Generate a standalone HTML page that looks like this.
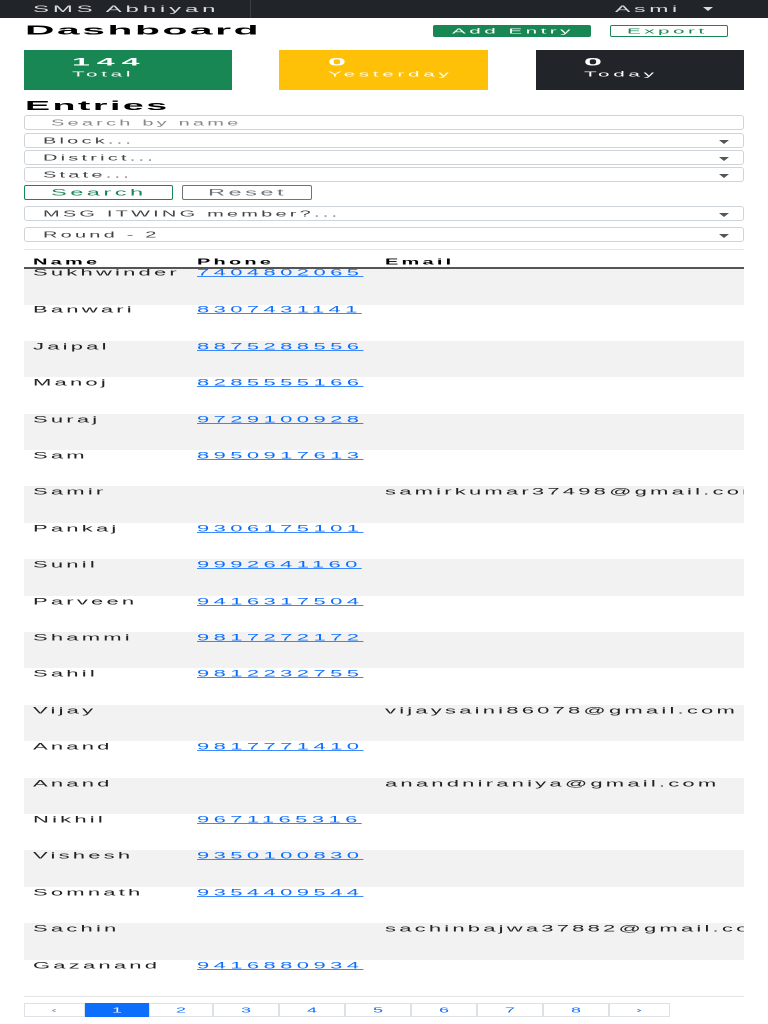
<!DOCTYPE html>
<html><head><meta charset="utf-8"><style>
*{margin:0;padding:0;box-sizing:border-box}
body{width:768px;height:1024px;overflow:hidden;background:#fff;font-family:"Liberation Sans",sans-serif;position:relative}
.a{position:absolute;line-height:0}
.s{display:inline-block;transform:scale(2,0.8);transform-origin:0 0;white-space:nowrap;letter-spacing:1.6px;font-size:11px;line-height:11px}
.inp{position:absolute;left:24px;width:720px;border:1px solid #ced4da;border-radius:3px;background:#fff}
.inp .s{position:absolute;left:18px;top:3px;color:#444;font-size:10px}
.car{position:absolute;right:14px;top:6px;width:0;height:0;border-left:5px solid transparent;border-right:5px solid transparent;border-top:4px solid #555}
.row{position:absolute;left:24px;width:720px;height:36.4px;overflow:hidden}
.row .s{position:absolute;top:2px;color:#222}
.row .p{color:#0d6efd;text-decoration:underline;letter-spacing:2.2px}
.pg{position:absolute;top:1003px;height:14px;border:1px solid #dee2e6;color:#0d6efd}
.pg .s{position:absolute;top:2px;font-size:9px;letter-spacing:1px}
</style></head><body>
<div class="a" style="left:0;top:0;width:768px;height:18px;background:#212529"></div>
<div class="a" style="left:250px;top:0;width:1px;height:18px;background:#3a3f44"></div>
<div class="a" style="left:33px;top:5px"><span class="s" style="color:#ddd;font-size:10px;transform:scale(2.4,0.9)">SMS Abhiyan</span></div>
<div class="a" style="left:615px;top:5px"><span class="s" style="color:#ddd;font-size:10px;transform:scale(2.3,0.9)">Asmi</span></div>
<div class="a" style="left:703px;top:7px;border-left:5px solid transparent;border-right:5px solid transparent;border-top:4px solid #ddd"></div>

<div class="a" style="left:25px;top:25px"><span class="s" style="font-weight:bold;font-size:16px;line-height:16px;letter-spacing:1px;transform:scale(2.55,0.8)">Dashboard</span></div>
<div class="a" style="left:433px;top:25px;width:158px;height:12px;background:#198754;border-radius:2px"></div>
<div class="a" style="left:452px;top:28px"><span class="s" style="color:#fff;font-size:9px;line-height:9px;letter-spacing:1.5px;transform:scale(2.3,0.8)">Add Entry</span></div>
<div class="a" style="left:610px;top:25px;width:118px;height:12px;border:1px solid #198754;border-radius:2px"></div>
<div class="a" style="left:627px;top:28px"><span class="s" style="color:#198754;font-size:9px;line-height:9px;letter-spacing:1.5px;transform:scale(2.3,0.8)">Export</span></div>

<div class="a" style="left:24px;top:50px;width:208px;height:40px;background:#198754"></div>
<div class="a" style="left:279px;top:50px;width:209px;height:40px;background:#ffc107"></div>
<div class="a" style="left:536px;top:50px;width:208px;height:40px;background:#212529"></div>
<div class="a" style="left:72px;top:56px"><span class="s" style="color:#fff;font-weight:bold;font-size:14px;line-height:14px;letter-spacing:3px;transform:scale(2.3,0.8)">144</span></div>
<div class="a" style="left:72px;top:71px"><span class="s" style="color:#fff;font-size:9px;line-height:9px;transform:scale(2.3,0.8)">Total</span></div>
<div class="a" style="left:328px;top:56px"><span class="s" style="color:#fff;font-weight:bold;font-size:14px;line-height:14px;letter-spacing:3px;transform:scale(2.3,0.8)">0</span></div>
<div class="a" style="left:328px;top:71px"><span class="s" style="color:#fff;font-size:9px;line-height:9px;transform:scale(2.3,0.8)">Yesterday</span></div>
<div class="a" style="left:584px;top:56px"><span class="s" style="color:#fff;font-weight:bold;font-size:14px;line-height:14px;letter-spacing:3px;transform:scale(2.3,0.8)">0</span></div>
<div class="a" style="left:584px;top:71px"><span class="s" style="color:#fff;font-size:9px;line-height:9px;transform:scale(2.3,0.8)">Today</span></div>

<div class="a" style="left:25px;top:100px"><span class="s" style="font-weight:bold;font-size:15px;line-height:15px;letter-spacing:1px;transform:scale(2.5,0.85)">Entries</span></div>

<div class="inp" style="top:115px;height:15px"><span class="s" style="left:26px;color:#888">Search by name</span></div>
<div class="inp" style="top:133px;height:15px"><span class="s">Block...</span><div class="car"></div></div>
<div class="inp" style="top:150px;height:15px"><span class="s">District...</span><div class="car"></div></div>
<div class="inp" style="top:167px;height:15px"><span class="s">State...</span><div class="car"></div></div>
<div class="a" style="left:24px;top:185px;width:149px;height:15px;border:1px solid #198754;border-radius:2px"></div>
<div class="a" style="left:51px;top:189px"><span class="s" style="color:#198754;font-size:11px;transform:scale(2.15,0.8)">Search</span></div>
<div class="a" style="left:182px;top:185px;width:130px;height:15px;border:1px solid #6c757d;border-radius:2px"></div>
<div class="a" style="left:208px;top:189px"><span class="s" style="color:#6c757d;font-size:11px;transform:scale(2.15,0.8)">Reset</span></div>
<div class="inp" style="top:206px;height:15px"><span class="s">MSG ITWING member?...</span><div class="car"></div></div>
<div class="inp" style="top:227px;height:15px"><span class="s">Round - 2</span><div class="car"></div></div>
<div class="a" style="left:24px;top:249px;width:720px;height:1px;background:#e5e5e5"></div>

<div class="a" style="left:33px;top:258px"><span class="s" style="font-weight:bold;font-size:10px">Name</span></div>
<div class="a" style="left:197px;top:258px"><span class="s" style="font-weight:bold;font-size:10px">Phone</span></div>
<div class="a" style="left:385px;top:258px"><span class="s" style="font-weight:bold;font-size:10px">Email</span></div>
<div class="a" style="left:24px;top:267px;width:720px;height:2px;background:#555"></div>

<div class="row" style="top:269px;background:#f2f2f2"><span class="s" style="left:9px;top:0">Sukhwinder</span><span class="s p" style="left:173px;top:0">7404802065</span></div>
<div class="row" style="top:304.4px"><span class="s" style="left:9px">Banwari</span><span class="s p" style="left:173px">8307431141</span></div>
<div class="row" style="top:340.8px;background:#f2f2f2"><span class="s" style="left:9px">Jaipal</span><span class="s p" style="left:173px">8875288556</span></div>
<div class="row" style="top:377.2px"><span class="s" style="left:9px">Manoj</span><span class="s p" style="left:173px">8285555166</span></div>
<div class="row" style="top:413.6px;background:#f2f2f2"><span class="s" style="left:9px">Suraj</span><span class="s p" style="left:173px">9729100928</span></div>
<div class="row" style="top:450px"><span class="s" style="left:9px">Sam</span><span class="s p" style="left:173px">8950917613</span></div>
<div class="row" style="top:486.4px;background:#f2f2f2"><span class="s" style="left:9px">Samir</span><span class="s" style="left:361px">samirkumar37498@gmail.com</span></div>
<div class="row" style="top:522.8px"><span class="s" style="left:9px">Pankaj</span><span class="s p" style="left:173px">9306175101</span></div>
<div class="row" style="top:559.2px;background:#f2f2f2"><span class="s" style="left:9px">Sunil</span><span class="s p" style="left:173px">9992641160</span></div>
<div class="row" style="top:595.6px"><span class="s" style="left:9px">Parveen</span><span class="s p" style="left:173px">9416317504</span></div>
<div class="row" style="top:632px;background:#f2f2f2"><span class="s" style="left:9px">Shammi</span><span class="s p" style="left:173px">9817272172</span></div>
<div class="row" style="top:668.4px"><span class="s" style="left:9px">Sahil</span><span class="s p" style="left:173px">9812232755</span></div>
<div class="row" style="top:704.8px;background:#f2f2f2"><span class="s" style="left:9px">Vijay</span><span class="s" style="left:361px">vijaysaini86078@gmail.com</span></div>
<div class="row" style="top:741.2px"><span class="s" style="left:9px">Anand</span><span class="s p" style="left:173px">9817771410</span></div>
<div class="row" style="top:777.6px;background:#f2f2f2"><span class="s" style="left:9px">Anand</span><span class="s" style="left:361px">anandniraniya@gmail.com</span></div>
<div class="row" style="top:814px"><span class="s" style="left:9px">Nikhil</span><span class="s p" style="left:173px">9671165316</span></div>
<div class="row" style="top:850.4px;background:#f2f2f2"><span class="s" style="left:9px">Vishesh</span><span class="s p" style="left:173px">9350100830</span></div>
<div class="row" style="top:886.8px"><span class="s" style="left:9px">Somnath</span><span class="s p" style="left:173px">9354409544</span></div>
<div class="row" style="top:923.2px;background:#f2f2f2"><span class="s" style="left:9px">Sachin</span><span class="s" style="left:361px">sachinbajwa37882@gmail.com</span></div>
<div class="row" style="top:959.6px"><span class="s" style="left:9px">Gazanand</span><span class="s p" style="left:173px">9416880934</span></div>
<div class="a" style="left:24px;top:996px;width:720px;height:1px;background:#e5e5e5"></div>

<div class="pg" style="left:24px;width:61px"><span class="s" style="left:26px;color:#888">&lsaquo;</span></div>
<div class="pg" style="left:85px;width:64px;background:#0d6efd;border-color:#0d6efd"><span class="s" style="left:26px;color:#fff">1</span></div>
<div class="pg" style="left:149px;width:64px"><span class="s" style="left:26px">2</span></div>
<div class="pg" style="left:213px;width:66px"><span class="s" style="left:27px">3</span></div>
<div class="pg" style="left:279px;width:66px"><span class="s" style="left:27px">4</span></div>
<div class="pg" style="left:345px;width:66px"><span class="s" style="left:27px">5</span></div>
<div class="pg" style="left:411px;width:66px"><span class="s" style="left:27px">6</span></div>
<div class="pg" style="left:477px;width:66px"><span class="s" style="left:27px">7</span></div>
<div class="pg" style="left:543px;width:66px"><span class="s" style="left:27px">8</span></div>
<div class="pg" style="left:609px;width:61px"><span class="s" style="left:26px">&rsaquo;</span></div>
</body></html>
